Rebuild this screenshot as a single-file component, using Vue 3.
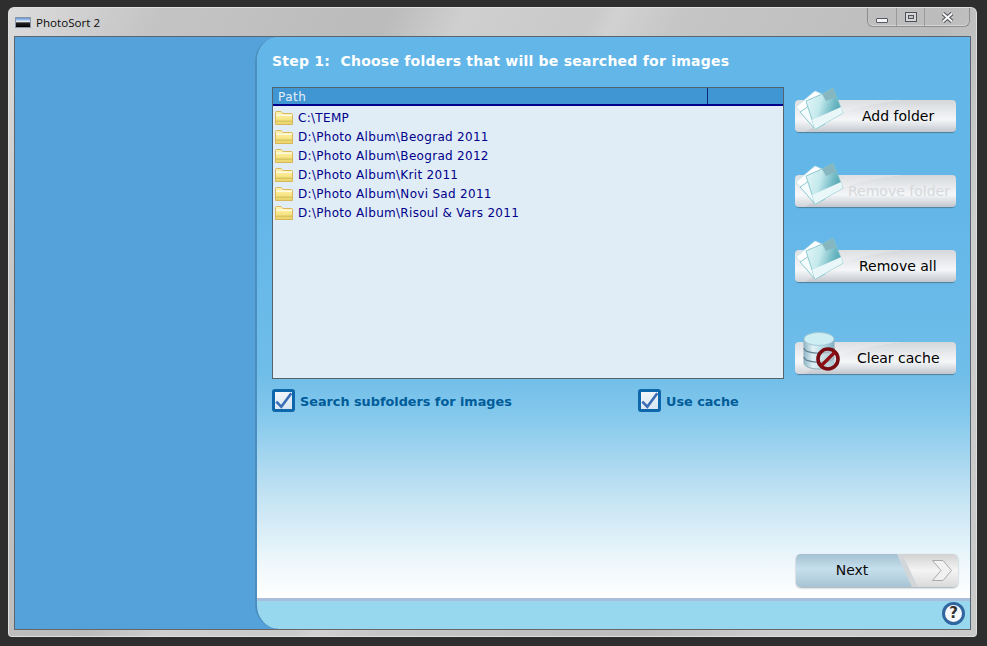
<script setup>
const folders = [
  'C:\\TEMP',
  'D:\\Photo Album\\Beograd 2011',
  'D:\\Photo Album\\Beograd 2012',
  'D:\\Photo Album\\Krit 2011',
  'D:\\Photo Album\\Novi Sad 2011',
  'D:\\Photo Album\\Risoul & Vars 2011',
]
const actions = [
  { label: 'Add folder', cls: 'add', icon: 'folder' },
  { label: 'Remove folder', cls: 'remove off', icon: 'folder' },
  { label: 'Remove all', cls: 'all', icon: 'folder' },
  { label: 'Clear cache', cls: 'clear', icon: 'db' },
]
</script>

<template>
  <div class="window">
    <svg width="0" height="0" class="defs">
      <defs>
        <linearGradient id="sheet" x1="0" y1="0.2" x2="1" y2="0.5">
          <stop offset="0" stop-color="#e4f6f8" />
          <stop offset="0.4" stop-color="#c4e9ec" />
          <stop offset="0.75" stop-color="#6fb9c4" />
          <stop offset="1" stop-color="#4aa0ae" />
        </linearGradient>
        <linearGradient id="tab" x1="0" y1="0" x2="0" y2="1">
          <stop offset="0" stop-color="#fff2b0" />
          <stop offset="0.45" stop-color="#fbe98f" />
          <stop offset="1" stop-color="#e8d36a" />
        </linearGradient>
        <linearGradient id="cyl" x1="0" y1="0" x2="1" y2="0">
          <stop offset="0" stop-color="#8fb7c6" />
          <stop offset="0.3" stop-color="#e2f2f6" />
          <stop offset="0.65" stop-color="#b5dbe5" />
          <stop offset="1" stop-color="#7fb0c2" />
        </linearGradient>
        <linearGradient id="photo" x1="0" y1="0" x2="0" y2="1">
          <stop offset="0" stop-color="#5f93d8" />
          <stop offset="0.4" stop-color="#e6edf4" />
          <stop offset="0.55" stop-color="#222" />
          <stop offset="1" stop-color="#000" />
        </linearGradient>
      </defs>
    </svg>
    <header class="titlebar">
      <svg class="appicon" width="16" height="11" viewBox="0 0 16 11">
        <rect width="16" height="11" fill="#8a97a8" />
        <rect x="1" y="1" width="14" height="9" fill="url(#photo)" />
      </svg>
      <span class="apptitle">PhotoSort 2</span>
      <div class="caption">
        <span class="cap min">
          <svg width="12" height="5" viewBox="0 0 12 5"><rect x="0.5" y="0.5" width="11" height="4" rx="0.5" fill="#f4f4f4" stroke="#565962" /></svg>
        </span>
        <span class="cap max">
          <svg width="12" height="10" viewBox="0 0 12 10">
            <rect x="0.5" y="0.5" width="11" height="9" fill="#d6d6d6" stroke="#4f525b" />
            <rect x="3.5" y="3.5" width="5" height="3" fill="#c2c2c2" stroke="#4f525b" />
          </svg>
        </span>
        <span class="cap close">
          <svg width="13" height="11" viewBox="0 0 13 11">
            <path d="M2 1.5 L11 9.5 M11 1.5 L2 9.5" stroke="#4a4d55" stroke-width="4" />
            <path d="M2 1.5 L11 9.5 M11 1.5 L2 9.5" stroke="#f6f6f6" stroke-width="2.2" />
          </svg>
        </span>
      </div>
    </header>

    <div class="client">
      <aside class="side"></aside>
      <main class="panel">
        <div class="content">
          <h1 class="step">Step 1:&nbsp; Choose folders that will be searched for images</h1>
          <div class="work">
            <section class="list">
              <div class="listhead">
                <span class="colpath">Path</span>
                <span class="colrest"></span>
              </div>
              <ul class="rows">
                <li v-for="f in folders" :key="f" class="row">
                  <svg class="ficon" width="18" height="14" viewBox="0 0 18 14">
                    <path d="M0.5 13.5 V1.5 Q0.5 0.5 1.5 0.5 H6 L8 2.5 H16.5 Q17.5 2.5 17.5 3.5 V13.5 Z" fill="url(#tab)" stroke="#d9b65c" />
                    <rect x="1" y="3.5" width="16" height="1.5" fill="#fffbe2" />
                    <rect x="1" y="9.5" width="16" height="1.5" fill="#d9c65f" />
                  </svg>
                  <span>{{ f }}</span>
                </li>
              </ul>
            </section>
            <div class="actions">
              <button v-for="a in actions" :key="a.label" class="action" :class="a.cls">
                <svg v-if="a.icon === 'folder'" class="bicon" width="50" height="46" viewBox="0 0 50 46">
                  <path d="M1 21 L20 5 L29 9 L13 34 Z" fill="#ffffff" stroke="#bfe3e9" stroke-width="0.8" />
                  <path d="M5 26 L20 43 L30 38 L14 20 Z" fill="#f4fbfc" stroke="#7fc2cc" stroke-width="0.9" />
                  <path d="M11 15 L27 8 L38 2 L48 27 L20 43 Z" fill="url(#sheet)" stroke="#7fc4cd" stroke-width="0.9" />
                  <path d="M27 8 L38 2 L41 11 L31 15 Z" fill="#86b6bf" />
                  <path d="M17 34 L46 21 L48 27 L20 43 Z" fill="#e9f7f8" />
                </svg>
                <svg v-else class="bicon db" width="40" height="42" viewBox="0 0 40 42">
                  <path d="M1 8 V32 C1 40 31 40 31 32 V8 Z" fill="url(#cyl)" stroke="#8fb0bd" />
                  <ellipse cx="16" cy="8" rx="15" ry="6.5" fill="#cdeef3" stroke="#a4c9d4" />
                  <path d="M1 17 C1 24 31 24 31 17 M1 26 C1 33 31 33 31 26" fill="none" stroke="#5f7f8e" stroke-width="1.2" />
                  <circle cx="25" cy="28" r="10" fill="#d6dfe2" fill-opacity="0.55" stroke="#7a0d12" stroke-width="3.6" />
                  <path d="M18 35 L32 21" stroke="#8e1016" stroke-width="3.4" />
                </svg>
                <span class="alabel">{{ a.label }}</span>
              </button>
            </div>
          </div>
          <div class="opts">
            <label class="opt first">
              <span class="box">
                <svg width="17" height="17" viewBox="0 0 17 17"><path d="M1.3 9.7 L6.3 14.7 L16.3 1.3" fill="none" stroke="#3a6db5" stroke-width="2.6" /></svg>
              </span>
              <span class="otext">Search subfolders for images</span>
            </label>
            <label class="opt">
              <span class="box">
                <svg width="17" height="17" viewBox="0 0 17 17"><path d="M1.3 9.7 L6.3 14.7 L16.3 1.3" fill="none" stroke="#3a6db5" stroke-width="2.6" /></svg>
              </span>
              <span class="otext">Use cache</span>
            </label>
          </div>
          <div class="nextwrap">
            <button class="next">
              <span class="nextedge"></span>
              <span class="nextlabel">Next</span>
              <span class="nextarrow">
                <svg width="20" height="21" viewBox="0 0 20 21">
                  <path d="M0.5 0.5 H11 L19.5 10.5 L11 20.5 H0.5 L9 10.5 Z" fill="#f1f1f1" stroke="#a9a9a9" />
                </svg>
              </span>
            </button>
          </div>
        </div>
        <footer class="foot">
          <span class="help">?</span>
        </footer>
      </main>
    </div>
  </div>
</template>

<style>
html, body { margin: 0; background: #2e2e2e; }
</style>

<style scoped>
.defs { position: absolute; }
.window {
  box-sizing: border-box;
  width: 969px;
  height: 630px;
  margin: 7px 0 0 8px;
  padding: 0 6px 7px 6px;
  border-radius: 6px 6px 4px 4px;
  display: flex;
  flex-direction: column;
  box-shadow: inset 0 0 0 1px #dfdfdf;
  background:
    linear-gradient(116deg, transparent 46%, rgba(255,255,255,.16) 48%, transparent 53%),
    linear-gradient(116deg, #dcdcdc 0%, #c4c4c4 12%, #bbbbbb 30%, #cfcfcf 36%, #c2c2c2 60%, #bcbcbc 74%, #cdcdcd 84%, #c9c9c9 100%);
}
.titlebar {
  height: 29px;
  flex: none;
  display: flex;
  align-items: center;
  position: relative;
  padding-left: 1px;
  padding-bottom: 1px;
  box-sizing: border-box;
}
.appicon { margin-top: 2px; }
.apptitle {
  margin-left: 5px;
  margin-top: 2px;
  font: 11.6px "Open Sans", sans-serif;
  color: #0b0b0b;
}
.caption {
  position: absolute;
  right: 1px;
  top: 1px;
  width: 103px;
  height: 19px;
  display: flex;
  box-sizing: border-box;
  border: 1px solid #8e8e8e;
  border-top: 0;
  border-radius: 0 0 6px 6px;
  box-shadow: inset 0 -1px 0 rgba(255,255,255,.4);
}
.cap {
  display: flex;
  align-items: center;
  justify-content: center;
  border-right: 1px solid #9a9a9a;
}
.cap:last-child { border-right: 0; flex: 1; }
.cap.min { width: 28px; }
.cap.max { width: 27px; }
.cap.min svg { margin-top: 6px; }
.client {
  flex: 1;
  display: flex;
  min-height: 0;
  border: 1px solid #5c6670;
  border-bottom-color: #666;
  background: #55a2db;
}
.side { width: 240px; flex: none; }
.panel {
  flex: 1;
  display: flex;
  flex-direction: column;
  border-left: 2px solid #4b8fc0;
  border-radius: 24px 0 0 24px;
  overflow: hidden;
  background: #98d8ee;
}
.content {
  flex: 1;
  box-sizing: border-box;
  padding: 0 0 0 15px;
  background: linear-gradient(180deg, #62b6e8 0, #62b6e8 30%, #6fbde9 60%, #86c9ec 68%, #c4e3f3 82%, #eff8fc 94%, #ffffff 100%);
  min-height: 0;
}
.step {
  margin: 0;
  padding-top: 16px;
  height: 50px;
  box-sizing: border-box;
  font: bold 14px "DejaVu Sans", sans-serif;
  letter-spacing: .24px;
  color: #fff;
  white-space: nowrap;
}
.work { display: flex; }
.list {
  width: 512px;
  height: 292px;
  box-sizing: border-box;
  border: 1px solid #54646e;
  background: #e0edf6;
  display: flex;
  flex-direction: column;
}
.listhead {
  height: 16px;
  flex: none;
  display: flex;
  background: #4095d3;
  border-bottom: 2px solid #00008b;
  font: 12px "DejaVu Sans", sans-serif;
  color: #e3eff8;
  letter-spacing: .5px;
}
.colpath {
  width: 429px;
  padding-left: 5px;
  line-height: 19px;
  border-right: 1px solid #0b2a78;
}
.rows { list-style: none; margin: 0; padding: 2px 0 0 2px; }
.row {
  height: 19px;
  display: flex;
  align-items: center;
  font: 12px "DejaVu Sans", sans-serif;
  letter-spacing: .3px;
  color: #00008b;
  white-space: nowrap;
}
.ficon { margin-right: 5px; flex: none; }
.actions {
  margin-left: 11px;
  width: 161px;
  padding-top: 13px;
  display: flex;
  flex-direction: column;
  gap: 43px;
}
.action {
  position: relative;
  height: 32px;
  width: 161px;
  padding: 0;
  border: 0;
  border-radius: 4px;
  box-shadow: 0 2px 1px -1px #4f7f9c;
  background:
    radial-gradient(ellipse 146px 61.5px at 140px 60px, transparent 99.4%, rgba(255,255,255,.22) 100%),
    linear-gradient(180deg, #d4d7da 0%, #e9ebee 38%, #f4f6f8 62%, #c2c7cd 100%);
  font: 14px "DejaVu Sans", sans-serif;
  color: #000;
  text-align: left;
}
.action.clear { margin-top: 17px; }
.bicon { position: absolute; left: 0; top: -14px; }
.bicon.db { left: 8px; top: -11px; }
.alabel { position: absolute; top: 8px; white-space: nowrap; }
.add .alabel { left: 67px; }
.off .alabel { left: 53px; color: #d6d8da; }
.all .alabel { left: 64px; }
.clear .alabel { left: 62px; }
.opts {
  display: flex;
  margin-top: 10px;
  height: 23px;
}
.opt {
  display: flex;
  align-items: flex-start;
  gap: 5px;
  font: bold 12.8px "DejaVu Sans", sans-serif;
  color: #005c99;
  white-space: nowrap;
}
.otext { line-height: 25px; }
.opt.first { width: 366px; }
.box {
  width: 23px;
  height: 23px;
  box-sizing: border-box;
  border: 3px solid #0f67ab;
  border-radius: 3px;
  background: linear-gradient(160deg, #f4f8fb, #d6e5f1);
  display: flex;
  align-items: center;
  justify-content: center;
}
.nextwrap { margin: 142px 0 0 524px; }
.next {
  width: 162px;
  height: 33px;
  padding: 0;
  border: 0;
  border-radius: 5px;
  display: block;
  overflow: hidden;
  box-shadow: 0 1px 2px #9aa6ad;
  background: linear-gradient(180deg, #d2d2d2 0%, #f4f4f4 50%, #dadada 100%);
  position: relative;
}
.nextlabel, .nextedge {
  position: absolute;
  left: 0;
  top: 0;
  height: 33px;
  box-sizing: border-box;
}
.nextedge {
  width: 122px;
  background: #d3d6d8;
  clip-path: polygon(0 0, 87% 0, 100% 100%, 0 100%);
}
.nextlabel {
  width: 116px;
  padding-right: 4px;
  text-align: center;
  font: 14px/33px "DejaVu Sans", sans-serif;
  color: #0a0a0a;
  clip-path: polygon(0 0, 87% 0, 100% 100%, 0 100%);
  background: linear-gradient(180deg, #a3c1d2 0%, #c6dfec 45%, #a7c4d4 100%);
}
.nextarrow { position: absolute; right: 6px; top: 6px; line-height: 0; }
.foot {
  height: 31px;
  flex: none;
  box-sizing: border-box;
  border-top: 3px solid #a9bedb;
  position: relative;
}
.help {
  position: absolute;
  right: 5px;
  top: 1px;
  width: 17px;
  height: 17px;
  box-sizing: content-box;
  border: 3px solid #31659f;
  border-radius: 50%;
  background: #f6f8fb;
  font: bold 15px/17px "DejaVu Sans", sans-serif;
  color: #333;
  text-align: center;
}
</style>
